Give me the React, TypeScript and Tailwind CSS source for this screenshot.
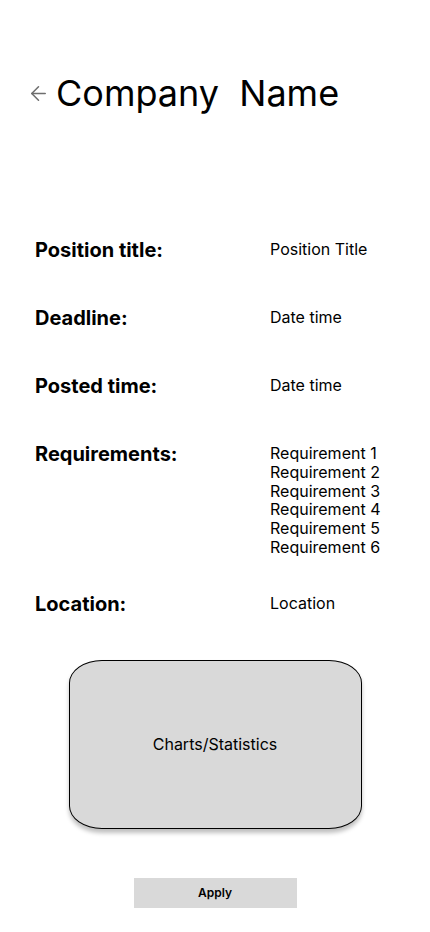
import { ArrowLeft } from 'lucide-react';

const rows = [
  { label: 'Position title:', values: ['Position Title'] },
  { label: 'Deadline:', values: ['Date time'] },
  { label: 'Posted time:', values: ['Date time'] },
  {
    label: 'Requirements:',
    values: [
      'Requirement 1',
      'Requirement 2',
      'Requirement 3',
      'Requirement 4',
      'Requirement 5',
      'Requirement 6',
    ],
  },
];

export default function App() {
  return (
    <div className="w-[430px] h-[932px] bg-white text-black font-['Inter',sans-serif] overflow-hidden">
      {/* header */}
      <div className="flex items-center pt-[71px] pl-[27px]">
        <ArrowLeft className="w-[23px] h-[23px] text-[#6e6e6e]" strokeWidth={1.6} />
        <h1 className="ml-[6px] text-[36px] leading-[44px] font-normal whitespace-pre">Company  Name</h1>
      </div>

      {/* details */}
      <div className="flex flex-col gap-[44px] pl-[35px] mt-[123px]">
        {rows.map((row) => (
          <div key={row.label} className="flex items-start">
            <div className="w-[235px] text-[20px] leading-[24px] font-bold">{row.label}</div>
            <div className="flex flex-col pt-[2px] text-[16px] leading-[18.8px]">
              {row.values.map((v) => (
                <span key={v}>{v}</span>
              ))}
            </div>
          </div>
        ))}
      </div>
      <div className="flex items-start pl-[35px] mt-[35px]">
        <div className="w-[235px] text-[20px] leading-[24px] font-bold">Location:</div>
        <div className="pt-[2px] text-[16px] leading-[18.8px]">Location</div>
      </div>

      {/* chart placeholder */}
      <div className="flex justify-center mt-[44px]">
        <div className="w-[293px] h-[169px] bg-[#d9d9d9] border border-black rounded-[33px/23px] shadow-[0_4px_4px_rgba(0,0,0,0.25)] flex items-center justify-center text-[16px]">
          Charts/Statistics
        </div>
      </div>

      {/* apply */}
      <div className="flex justify-center mt-[49px]">
        <button className="w-[163px] h-[30px] bg-[#d9d9d9] text-[12px] font-semibold">Apply</button>
      </div>
    </div>
  );
}
